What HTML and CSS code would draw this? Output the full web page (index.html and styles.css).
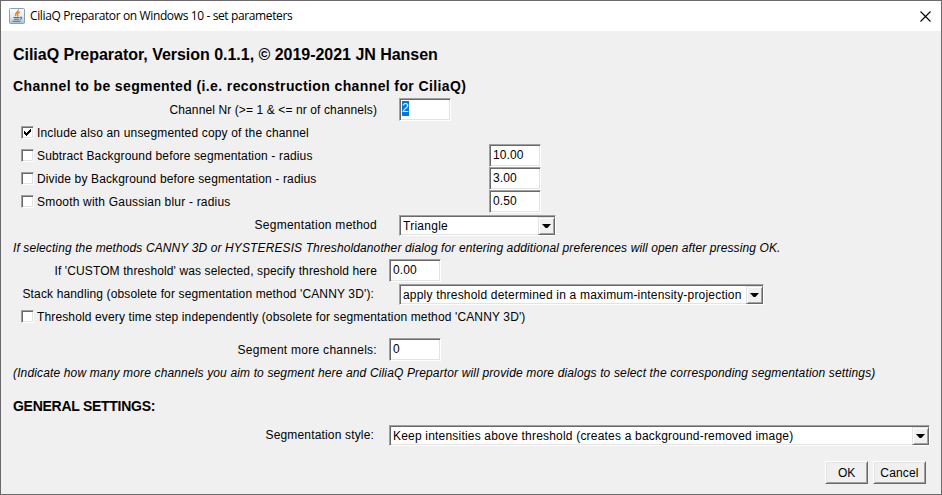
FILE: index.html
```
<!DOCTYPE html>
<html lang="en">
<head>
<meta charset="utf-8">
<title>CiliaQ Preparator on Windows 10 - set parameters</title>
<link rel="stylesheet" href="styles.css">
</head>
<body>
<div class="window">
  <header class="titlebar">
    <svg class="app-icon" width="16" height="16" viewBox="0 0 16 16">
      <defs><linearGradient id="g" x1="0" y1="0" x2="0" y2="1"><stop offset="0" stop-color="#fbfcfd"/><stop offset=".55" stop-color="#e4ebf0"/><stop offset="1" stop-color="#a9c4d8"/></linearGradient></defs>
      <rect x=".5" y=".5" width="15" height="15" rx="1" fill="url(#g)" stroke="#8aa0b2"/>
      <path d="M9.500 1.500C10 4 4.800 4.800 7 8.200M10.800 4C8.600 5 8 5.800 8.800 6.700C9.200 7.400 9 8 8.300 8.500" fill="none" stroke="#e8862e" stroke-width="1.400"/>
      <path d="M4.500 9.500H10.500M5 11.300H10M3.500 13.300H11.500M10.800 9.300C13.500 8.600 13 11.300 10.800 11.500" fill="none" stroke="#3f6f94" stroke-width="1.100"/>
    </svg>
    <span class="caption">CiliaQ Preparator on Windows 10 - set parameters</span>
    <svg class="close" width="11" height="11" viewBox="0 0 11 11"><path d="M.5 .5L10.500 10.500M10.500 .5L.5 10.500" stroke="#000" stroke-width="1.100"/></svg>
  </header>
  <main class="content">
    <h1>CiliaQ Preparator, Version 0.1.1, © 2019-2021 JN Hansen</h1>
    <h2>Channel to be segmented (i.e. reconstruction channel for CiliaQ)</h2>

    <div class="row">
      <span class="label t-nr">Channel Nr (&gt;= 1 &amp; &lt;= nr of channels)</span>
      <span class="field shifted"><span class="selected">2</span></span>
    </div>
    <div class="row check">
      <span class="box"><svg width="9" height="9" viewBox="0 0 9 9"><path d="M1 3V6L3 8L8 3V0L3 5Z" shape-rendering="crispEdges"/></svg></span>
      <span class="t-include">Include also an unsegmented copy of the channel</span>
    </div>
    <div class="row check">
      <span class="box"></span><span class="check-label t-sub">Subtract Background before segmentation - radius</span>
      <span class="field">10.00</span>
    </div>
    <div class="row check">
      <span class="box"></span><span class="check-label t-div">Divide by Background before segmentation - radius</span>
      <span class="field">3.00</span>
    </div>
    <div class="row check">
      <span class="box"></span><span class="check-label t-smooth">Smooth with Gaussian blur - radius</span>
      <span class="field">0.50</span>
    </div>
    <div class="row">
      <span class="label t-method">Segmentation method</span>
      <span class="select method"><span class="value t-tri">Triangle</span><span class="drop"></span></span>
    </div>
    <p class="row note t-note1">If selecting the methods CANNY 3D or HYSTERESIS Thresholdanother dialog for entering additional preferences will open after pressing OK.</p>
    <div class="row">
      <span class="label t-custom">If 'CUSTOM threshold' was selected, specify threshold here</span>
      <span class="field">0.00</span>
    </div>
    <div class="row">
      <span class="label wide-gap t-stack">Stack handling (obsolete for segmentation method 'CANNY 3D'):</span>
      <span class="select stack"><span class="value">apply threshold determined in a maximum-intensity-projection</span><span class="drop"></span></span>
    </div>
    <div class="row check">
      <span class="box"></span><span class="t-every">Threshold every time step independently (obsolete for segmentation method 'CANNY 3D')</span>
    </div>
    <div class="row more">
      <span class="label t-more">Segment more channels:</span>
      <span class="field">0</span>
    </div>
    <p class="row note t-note2">(Indicate how many more channels you aim to segment here and CiliaQ Prepartor will provide more dialogs to select the corresponding segmentation settings)</p>
    <h2 class="general">GENERAL SETTINGS:</h2>
    <div class="row">
      <span class="label wide-gap t-style">Segmentation style:</span>
      <span class="select style"><span class="value">Keep intensities above threshold (creates a background-removed image)</span><span class="drop"></span></span>
    </div>
    <footer class="buttons">
      <button class="ok">OK</button>
      <button class="cancel">Cancel</button>
    </footer>
  </main>
</div>
</body>
</html>
```
FILE: styles.css
```
* { box-sizing: border-box; }
body { margin: 0; font: 12px/23px "Liberation Sans", Arial, sans-serif; color: #000; }
.window { width: 942px; height: 495px; border: 1px solid #6b696b; background: #f0f0f0; overflow: hidden; }

.titlebar { display: flex; align-items: center; height: 30px; padding: 0 10px 0 8px; background: #fff; }
.app-icon { margin-right: 5px; }
.caption { font: 12px/30px "Open Sans", sans-serif; letter-spacing: -0.375px; white-space: nowrap; }
.close { margin-left: auto; }

h1, h2, p { margin: 0; white-space: nowrap; }
h1 { margin: 12px 0 9px 12px; font-size: 16px; line-height: 23px; letter-spacing: -0.025px; }
h2 { margin-left: 12px; font-size: 14px; line-height: 23px; letter-spacing: 0.385px; }
.general { margin: 11px 0 5px 12px; letter-spacing: -0.27px; }

.row { display: flex; height: 23px; line-height: 25px; white-space: nowrap; }
.label { width: 376px; margin-right: 12px; text-align: right; }
.wide-gap { width: 373px; margin-right: 15px; }
.note { padding-left: 12px; font-style: italic; }
.more { margin-top: 10px; }

.check { padding-left: 20px; }
.check-label { width: 452px; }
.box { width: 13px; height: 13px; margin: 5px 3px 0 0; background: #fff; border: 1px solid; border-color: #a0a0a0 #fff #fff #a0a0a0; box-shadow: inset 1px 1px #696969, inset -1px -1px #e3e3e3; display: flex; padding: 1px 0 0 1px; }

.field { width: 52px; height: 23px; padding-left: 3px; line-height: 20px; letter-spacing: 0.08px; background: #fff; border: 1px solid; border-color: #a0a0a0 #fff #fff #a0a0a0; box-shadow: inset 1px 1px #696969, inset -1px -1px #e3e3e3; }
.shifted { margin-left: 10px; padding-left: 2px; }
.selected { display: block; width: 7px; height: 15px; margin-top: 2px; line-height: 15px; background: #0078d7; color: #fff; }

.select { display: flex; align-self: flex-end; height: 21px; padding: 1px; line-height: 18px; letter-spacing: 0.195px; background: #fff; border: 1px solid; border-color: #a0a0a0 #fff #fff #a0a0a0; box-shadow: inset 1px 1px #696969, inset -1px -1px #e3e3e3; }
.value { flex: 1; padding-left: 2px; }
.drop { width: 17px; margin: 0 -1px -1px 0; background: #f0f0f0; border: 1px solid; border-color: #e3e3e3 #696969 #696969 #e3e3e3; box-shadow: inset 1px 1px #fff, inset -1px -1px #a0a0a0; display: flex; justify-content: center; align-items: center; }
.drop::before { content: ""; width: 9px; height: 4px; background: #000; clip-path: polygon(0 0, 100% 0, 60% 100%, 40% 100%); }
.method { width: 157px; margin-left: 10px; }
.stack { width: 365px; margin-left: 10px; }
.style { width: 541px; }

.buttons { display: flex; justify-content: flex-end; gap: 5px; margin: 15px 15px 0 0; }
button { height: 23px; padding: 0; font: 12px/19px "Liberation Sans", Arial, sans-serif; color: #000; background: #f0f0f0; border: 1px solid; border-color: #fff #696969 #696969 #fff; box-shadow: inset 1px 1px #e3e3e3, inset -1px -1px #a0a0a0; }
.ok { width: 43px; padding-top: 1px; letter-spacing: -0.15px; }
.cancel { width: 53px; padding-top: 1px; letter-spacing: 0.15px; }

.t-nr { letter-spacing: 0.109px; }
.t-include { letter-spacing: 0.165px; }
.t-sub { letter-spacing: 0.155px; }
.t-div { letter-spacing: 0.135px; }
.t-smooth { letter-spacing: 0.199px; }
.t-method { letter-spacing: 0.267px; }
.t-note1 { letter-spacing: 0.113px; }
.t-custom { letter-spacing: 0.115px; }
.t-stack { letter-spacing: 0.136px; }
.t-every { letter-spacing: 0.132px; }
.t-more { letter-spacing: 0.277px; }
.t-note2 { letter-spacing: 0.143px; }
.t-style { letter-spacing: 0.163px; }
.t-tri { letter-spacing: 0.26px; }
```
